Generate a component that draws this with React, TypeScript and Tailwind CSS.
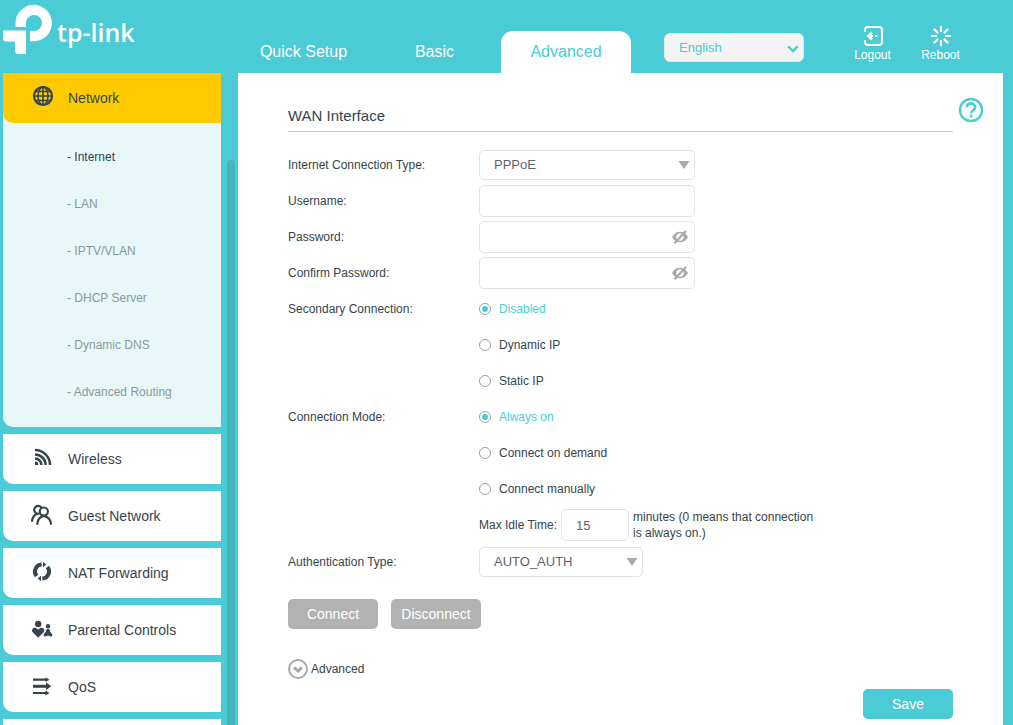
import { useState } from "react";
import type { ReactNode } from "react";

type IconProps = { children: ReactNode };

function MenuIcon({ children }: IconProps) {
  return (
    <svg viewBox="0 0 24 24" className="size-6 shrink-0 text-[#36444b]" fill="none" stroke="currentColor" aria-hidden="true">
      {children}
    </svg>
  );
}

const icons = {
  network: (
    <MenuIcon>
      <circle cx="13" cy="10" r="9" strokeWidth="2.2" />
      <ellipse cx="13" cy="10" rx="5" ry="9" strokeWidth="1.6" />
      <path d="M13 1v18M4 10h18M5 5.500h16M5 14.500h16" strokeWidth="1.6" />
    </MenuIcon>
  ),
  wireless: (
    <MenuIcon>
      <path d="M5 3a15 15 0 0 1 15 15M5 7.400A10.600 10.600 0 0 1 15.600 18M5 11.600A6.400 6.400 0 0 1 11.400 18" strokeWidth="2.500" />
      <path d="M5 14.600A3.400 3.400 0 0 1 8.400 18H5z" fill="currentColor" stroke="none" />
    </MenuIcon>
  ),
  guest: (
    <MenuIcon>
      <path d="M9.200 9.600A3.900 3.900 0 1 1 11.800 4.400" strokeWidth="2.200" />
      <circle cx="13.800" cy="7.600" r="4.100" strokeWidth="2.200" />
      <path d="M2 17.800c.1-4 2-6.600 5.400-8.200M7.200 20.800c.3-5.200 3-8.200 6.600-8.900 4 .8 7 3.700 7.300 8.900" strokeWidth="2.200" />
    </MenuIcon>
  ),
  nat: (
    <MenuIcon>
      <path d="M11.600 3.500A7 7 0 0 0 6.600 15" strokeWidth="4" />
      <path d="M12.400 17.500A7 7 0 0 0 17.400 6" strokeWidth="4" />
      <path d="M13 1l3.400 2.600L13 6.200zM11 20l-3.400-2.600L11 14.800z" fill="currentColor" stroke="none" />
    </MenuIcon>
  ),
  parental: (
    <MenuIcon>
      <g fill="currentColor" stroke="none">
        <circle cx="8.200" cy="6" r="3.200" />
        <path d="M8.200 19.800 2.900 14.600C.8 12 3.200 8.800 6 10.100L8.200 11.600 10.400 10.100C13.200 8.800 15.600 12 13.500 14.600z" />
        <circle cx="18" cy="8.200" r="2.200" />
        <path d="M18 10.800l2.300 1.400-.4 1.200 2.300 2.600q.6 2.600-1.700 2.600l-2.500-1-2.500 1q-2.300 0-1.700-2.600l2.300-2.600-.4-1.200z" />
      </g>
    </MenuIcon>
  ),
  qos: (
    <MenuIcon>
      <path d="M3 4.700h14M3 18h14" strokeWidth="2.200" />
      <path d="M3 11.300h14" strokeWidth="3" />
      <path d="M15.500 2.300l4 2.400-4 2.400zM16 7.300l5.200 4-5.200 4zM15.500 15.600l4 2.400-4 2.400z" fill="currentColor" stroke="none" />
    </MenuIcon>
  ),
};

const subItems = ["Internet", "LAN", "IPTV/VLAN", "DHCP Server", "Dynamic DNS", "Advanced Routing"];

const menu = [
  { label: "Wireless", icon: icons.wireless },
  { label: "Guest Network", icon: icons.guest },
  { label: "NAT Forwarding", icon: icons.nat },
  { label: "Parental Controls", icon: icons.parental },
  { label: "QoS", icon: icons.qos },
];

function Header() {
  return (
    <header className="flex h-[73px] shrink-0 text-white">
      <a href="#" className="flex w-[238px] shrink-0 items-start gap-px">
        <svg viewBox="0 0 56 56" className="size-14 shrink-0" fill="currentColor" aria-hidden="true">
          <path d="M15.500 27v-4a18.200 18.200 0 1 1 18.500 18.200h-4V31h4a8 8 0 1 0-8-8v4z" />
          <path d="M3 30.500h23V54h-8a3 3 0 0 1-3-3v-9.500H6a3 3 0 0 1-3-3z" />
        </svg>
        <span className="pt-3 font-['Open_Sans',sans-serif] text-[25px] leading-10 font-semibold">tp-link</span>
      </a>
      <nav className="flex shrink-0 items-end text-base">
        <a href="#" className="flex h-[42px] w-[131px] items-center justify-center">Quick Setup</a>
        <a href="#" className="mr-px flex h-[42px] w-[131px] items-center justify-center">Basic</a>
        <a href="#" className="flex h-[42px] w-[130px] items-center justify-center rounded-t-xl bg-white text-[#4acbd6]">
          Advanced
        </a>
      </nav>
      <div className="relative mt-[33px] ml-[33px] h-[29px] w-[140px] shrink-0">
        <select
          aria-label="Language"
          className="h-full w-full appearance-none rounded-md border border-[#e6e8e8] bg-[#f4f4f4] pl-[14px] text-[13px] text-[#4acbd6]"
        >
          <option>English</option>
        </select>
        <svg viewBox="0 0 12 8" className="pointer-events-none absolute top-3 right-[5px] h-2 w-3 text-[#4acbd6]" fill="none" stroke="currentColor" strokeWidth="2.400">
          <path d="M1.300 1.300 6 6l4.700-4.700" />
        </svg>
      </div>
      <div className="mr-[47px] ml-auto flex gap-[17px] pt-[25px] text-xs">
        <button type="button" className="flex w-[51px] flex-col items-center">
          <svg viewBox="0 0 22 22" className="size-[22px]" fill="none" stroke="currentColor" strokeWidth="2" aria-hidden="true">
            <path d="M3 7V5a3 3 0 0 1 3-3h11a3 3 0 0 1 3 3v12a3 3 0 0 1-3 3H6a3 3 0 0 1-3-3v-2" />
            <path d="M8.500 11H11M13 11h2.500" />
            <path d="M10 7.500 6.500 11l3.500 3.500" strokeWidth="2.800" />
          </svg>
          <span>Logout</span>
        </button>
        <button type="button" className="flex w-[51px] flex-col items-center">
          <svg viewBox="0 0 22 22" className="size-[22px]" fill="none" stroke="currentColor" strokeWidth="2.200" aria-hidden="true">
            <path d="M11 1v6M11 15v6M1 11h6M15 11h6M3.900 3.900l4.200 4.200M13.900 13.900l4.200 4.200M3.900 18.100l4.200-4.200M13.900 8.100l4.200-4.200" />
          </svg>
          <span>Reboot</span>
        </button>
      </div>
    </header>
  );
}

function Sidebar() {
  return (
    <aside className="flex w-[238px] shrink-0 pl-[3px]">
      <ul className="flex w-[218px] shrink-0 flex-col gap-[7px] text-sm text-[#36444b]">
        <li className="rounded-bl-[10px] bg-[#e8f8f8]">
          <a href="#" className="flex h-[50px] items-center gap-[14px] rounded-bl-[10px] bg-[#ffcb00] pl-[27px]">
            {icons.network}
            Network
          </a>
          <ul className="pt-[10px] pb-3 text-xs">
            {subItems.map((item, i) => (
              <li key={item}>
                <a href="#" className={`flex h-[47px] items-center pl-16 ${i === 0 ? "text-[#36444b]" : "text-[#869a9d]"}`}>
                  - {item}
                </a>
              </li>
            ))}
          </ul>
        </li>
        {menu.map((item) => (
          <li key={item.label}>
            <a href="#" className="flex h-[50px] items-center gap-[14px] rounded-bl-[10px] bg-white pl-[27px]">
              {item.icon}
              {item.label}
            </a>
          </li>
        ))}
        <li className="h-[50px] shrink-0 rounded-bl-[10px] bg-white" />
      </ul>
      <div className="mt-[87px] ml-[6px] w-2 rounded-t bg-[#46b3bf]" />
    </aside>
  );
}

function Row({ label, htmlFor, children }: { label?: string; htmlFor?: string; children: ReactNode }) {
  return (
    <div className="flex h-9 items-center">
      {htmlFor ? (
        <label htmlFor={htmlFor} className="w-[191px] shrink-0">{label}</label>
      ) : (
        <span className="w-[191px] shrink-0">{label}</span>
      )}
      {children}
    </div>
  );
}

function Select({ id, value, width }: { id: string; value: string; width: string }) {
  return (
    <div className={`relative h-[30px] ${width}`}>
      <select id={id} className="h-full w-full appearance-none rounded-[5px] border border-[#e2e3e4] bg-white pl-[14px] text-[13px] text-[#5f6467]">
        <option>{value}</option>
      </select>
      <svg viewBox="0 0 12 8" className="pointer-events-none absolute top-[11px] right-[5px] h-2 w-3 fill-[#a7a9ac]">
        <path d="M.5 0h11L6 8z" />
      </svg>
    </div>
  );
}

const inputClass = "h-8 rounded-[5px] border border-[#e2e3e4] bg-white px-[14px] text-[13px] text-[#5f6467]";

function PasswordInput({ id }: { id: string }) {
  const [show, setShow] = useState(false);
  return (
    <div className="relative">
      <input id={id} type={show ? "text" : "password"} className={`${inputClass} w-[216px]`} />
      <button type="button" aria-label="Show password" onClick={() => setShow(!show)} className="absolute top-2 right-[6px]">
        <svg viewBox="0 0 18 16" className="h-4 w-[18px]" fill="none" stroke="#a7a9ac" aria-hidden="true">
          <path d="M1 8c3.600-7 12.400-7 16 0-3.600 7-12.400 7-16 0zM9 4.200a3.800 3.800 0 1 0 .01 0z" fill="#a7a9ac" fillRule="evenodd" stroke="none" />
          <path d="M15 2 3.500 14.200" strokeWidth="2.200" />
        </svg>
      </button>
    </div>
  );
}

function Radios({ name, label, options }: { name: string; label: string; options: string[] }) {
  const [value, setValue] = useState(options[0]);
  return (
    <div role="radiogroup" aria-label={label}>
      {options.map((option, i) => (
        <Row key={option} label={i === 0 ? label : undefined}>
          <label className="flex items-center gap-2">
            <input
              type="radio"
              name={name}
              checked={value === option}
              onChange={() => setValue(option)}
              className="grid size-3 appearance-none place-content-center rounded-full border border-[#9fa1a4] before:size-[6px] before:rounded-full checked:before:bg-[#4acbd6]"
            />
            <span className={value === option ? "text-[#4acbd6]" : ""}>{option}</span>
          </label>
        </Row>
      ))}
    </div>
  );
}

export default function App() {
  return (
    <div className="flex h-screen flex-col overflow-hidden bg-[#4acbd6] font-['Liberation_Sans',Arial,sans-serif]">
      <Header />
      <div className="flex min-h-0 flex-1">
        <Sidebar />
        <main className="mr-[10px] flex-1 bg-white pr-[19px] pl-[50px] text-xs text-[#36444b]">
          <div className="flex gap-[5px] pt-6">
            <h1 className="mt-1 h-[31px] flex-1 border-b border-[#c8c9ca] pt-[3px] text-[15px] leading-6">WAN Interface</h1>
            <button type="button" aria-label="Help" className="size-[26px]">
              <svg viewBox="0 0 26 26" className="size-[26px]" fill="none" stroke="#4acbd6" strokeWidth="2.600" aria-hidden="true">
                <circle cx="13" cy="13" r="11" strokeWidth="2.400" />
                <path d="M8.800 10.300c.2-5 8.400-4.800 8.400 0 0 3-4 2.800-4 6M13.200 17.600v2.600" />
              </svg>
            </button>
          </div>
          <form className="pt-[15px] pr-[31px]" onSubmit={(e) => e.preventDefault()}>
            <Row label="Internet Connection Type:" htmlFor="type">
              <Select id="type" value="PPPoE" width="w-[216px]" />
            </Row>
            <Row label="Username:" htmlFor="username">
              <input id="username" type="text" className={`${inputClass} w-[216px]`} />
            </Row>
            <Row label="Password:" htmlFor="password">
              <PasswordInput id="password" />
            </Row>
            <Row label="Confirm Password:" htmlFor="confirm">
              <PasswordInput id="confirm" />
            </Row>
            <Radios name="secondary" label="Secondary Connection:" options={["Disabled", "Dynamic IP", "Static IP"]} />
            <Radios name="mode" label="Connection Mode:" options={["Always on", "Connect on demand", "Connect manually"]} />
            <Row>
              <label htmlFor="idle">Max Idle Time:</label>
              <input id="idle" type="text" defaultValue="15" className={`${inputClass} mx-1 w-[68px]`} />
              <span className="w-[190px] leading-4">minutes (0 means that connection is always on.)</span>
            </Row>
            <div className="pt-px">
              <Row label="Authentication Type:" htmlFor="auth">
                <Select id="auth" value="AUTO_AUTH" width="w-[164px]" />
              </Row>
            </div>
            <div className="mt-[19px] flex gap-[13px] text-sm text-white">
              <button type="button" className="h-[30px] w-[90px] rounded-[5px] bg-[#b2b2b2]">Connect</button>
              <button type="button" className="h-[30px] w-[90px] rounded-[5px] bg-[#b2b2b2]">Disconnect</button>
            </div>
            <button type="button" className="mt-[30px] flex items-center gap-[3px]">
              <svg viewBox="0 0 20 20" className="size-5" fill="none" stroke="#a7a9ac" aria-hidden="true">
                <circle cx="10" cy="10" r="9" strokeWidth="2" />
                <path d="M6 8.300 10 12l4-3.700" strokeWidth="3" />
              </svg>
              Advanced
            </button>
            <div className="mt-[10px] flex justify-end">
              <button type="submit" className="h-[30px] w-[90px] rounded-[5px] bg-[#4acbd6] text-sm text-white">Save</button>
            </div>
          </form>
        </main>
      </div>
    </div>
  );
}
